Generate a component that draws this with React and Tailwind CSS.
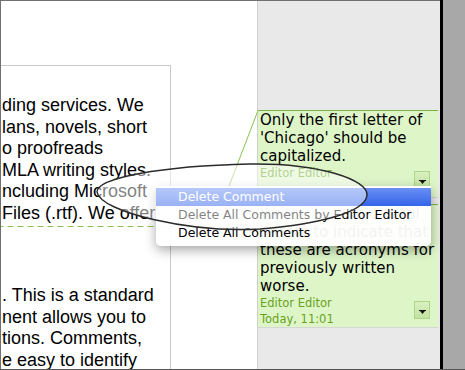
import React from 'react';

// Document text, visible part of each line (the page is scrolled to the left)
const PARA_ONE = [
    'ding services. We',
    'lans, novels, short',
    'o proofreads',
    'MLA writing styles.',
    'ncluding Microsoft',
    'Files (.rtf). We offer',
];

const PARA_TWO = [
    '. This is a standard',
    'nent allows you to',
    'tions. Comments,',
    'e easy to identify',
];

const MENU_ITEMS = [
    { label: 'Delete Comment', active: true },
    { label: 'Delete All Comments by Editor Editor' },
    { label: 'Delete All Comments' },
];

function MenuButton() {
    return (
        <div className="mt-[6px] mr-[8px] w-[16px] h-[18px] border border-[#afd58a] bg-linear-to-b from-[#d9f0c0] to-[#c3e3a0] flex items-end justify-center pb-[4px]">
            <svg width="7" height="4" viewBox="0 0 7 4">
                <rect x="0" y="0" width="7" height="1" fill="#111" />
                <path d="M1 1h5L3.5 4z" fill="#111" />
            </svg>
        </div>
    );
}

function Comment({ lines, author, date, className = '' }) {
    return (
        <div className={`mr-[2px] border-t border-b border-t-[#7cb342] border-b-[#d6d6d6] bg-[#def5c8] pl-[2px] ${className}`}>
            <div className="text-[15px] leading-[18px] text-black">
                {lines.map((l) => (
                    <div key={l} className="whitespace-nowrap">{l}</div>
                ))}
            </div>
            <div className="flex justify-between items-start">
                <div className="text-[11.5px] leading-[16px] text-[#67a31b]">
                    <div>{author}</div>
                    <div className="h-[16px]">{date}</div>
                </div>
                <MenuButton />
            </div>
        </div>
    );
}

export default function App() {
    return (
        <div
            className="relative w-[465px] h-[370px] overflow-hidden flex border-b border-[#555] bg-white"
            style={{ fontFamily: '"DejaVu Sans", Verdana, sans-serif' }}
        >
            {/* document + comment pane */}
            <div className="flex border-t border-l border-[#707070]">
                <div className="w-[256px]">
                    <div
                        className="mt-[64px] w-[170px] border-t border-r border-[#c9c9c9] pt-[29px] pl-[1px] text-[18px] leading-[21.5px] text-black overflow-hidden"
                        style={{ fontFamily: '"Liberation Sans", Arial, sans-serif' }}
                    >
                        {PARA_ONE.map((l) => (
                            <div key={l} className="whitespace-nowrap">{l}</div>
                        ))}
                        <div className="mt-[61px]">
                            {PARA_TWO.map((l) => (
                                <div key={l} className="whitespace-nowrap">{l}</div>
                            ))}
                        </div>
                    </div>
                </div>
                <div className="w-[183px] border-l border-[#cfcfcf] bg-[#e9e9e9] pt-[109px]">
                    <Comment
                        lines={['Only the first letter of', "'Chicago' should be", 'capitalized.']}
                        author="Editor Editor"
                    />
                    <Comment
                        className="mt-[6px]"
                        lines={['Write these in capital', 'letters to indicate that', 'these are acronyms for', 'previously written', 'worse.']}
                        author="Editor Editor"
                        date="Today, 11:01"
                    />
                </div>
            </div>
            <div className="w-[3px] bg-black" />
            <div className="flex-1 bg-[#a8a8a8]" />

            {/* comment anchor line */}
            <svg className="absolute inset-0 pointer-events-none" width="465" height="370">
                <path d="M258 110.5 L213.5 226.5" stroke="#8cc152" strokeWidth="1" fill="none" />
                <path d="M213.5 226.5 H1" stroke="#8cc152" strokeWidth="1" strokeDasharray="6 4" fill="none" />
            </svg>

            {/* context menu */}
            <div className="absolute left-[156px] top-[186px] w-[275px] pt-[2px] pb-[4px] rounded-b-[5px] bg-white/95 shadow-[0_4px_12px_rgba(0,0,0,0.35)] text-[12.5px]">
                {MENU_ITEMS.map((item) => (
                    <div
                        key={item.label}
                        className={`h-[18px] leading-[18px] pl-[22px] whitespace-nowrap ${
                            item.active ? 'bg-linear-to-b from-[#6a8ff3] to-[#3464ea] text-white' : 'text-black'
                        }`}
                    >
                        {item.label}
                    </div>
                ))}
            </div>

            {/* hand-drawn ellipse annotation */}
            <svg className="absolute inset-0 pointer-events-none" width="465" height="370">
                <path
                    d="M97 192 C97 178, 160 166, 250 164 C320 163, 368 180, 367 195 C366 212, 320 224, 260 229 C190 233, 100 212, 97 192 Z"
                    fill="rgba(255,255,255,0.5)"
                    stroke="#2b2b2b"
                    strokeWidth="1.5"
                />
            </svg>
        </div>
    );
}
